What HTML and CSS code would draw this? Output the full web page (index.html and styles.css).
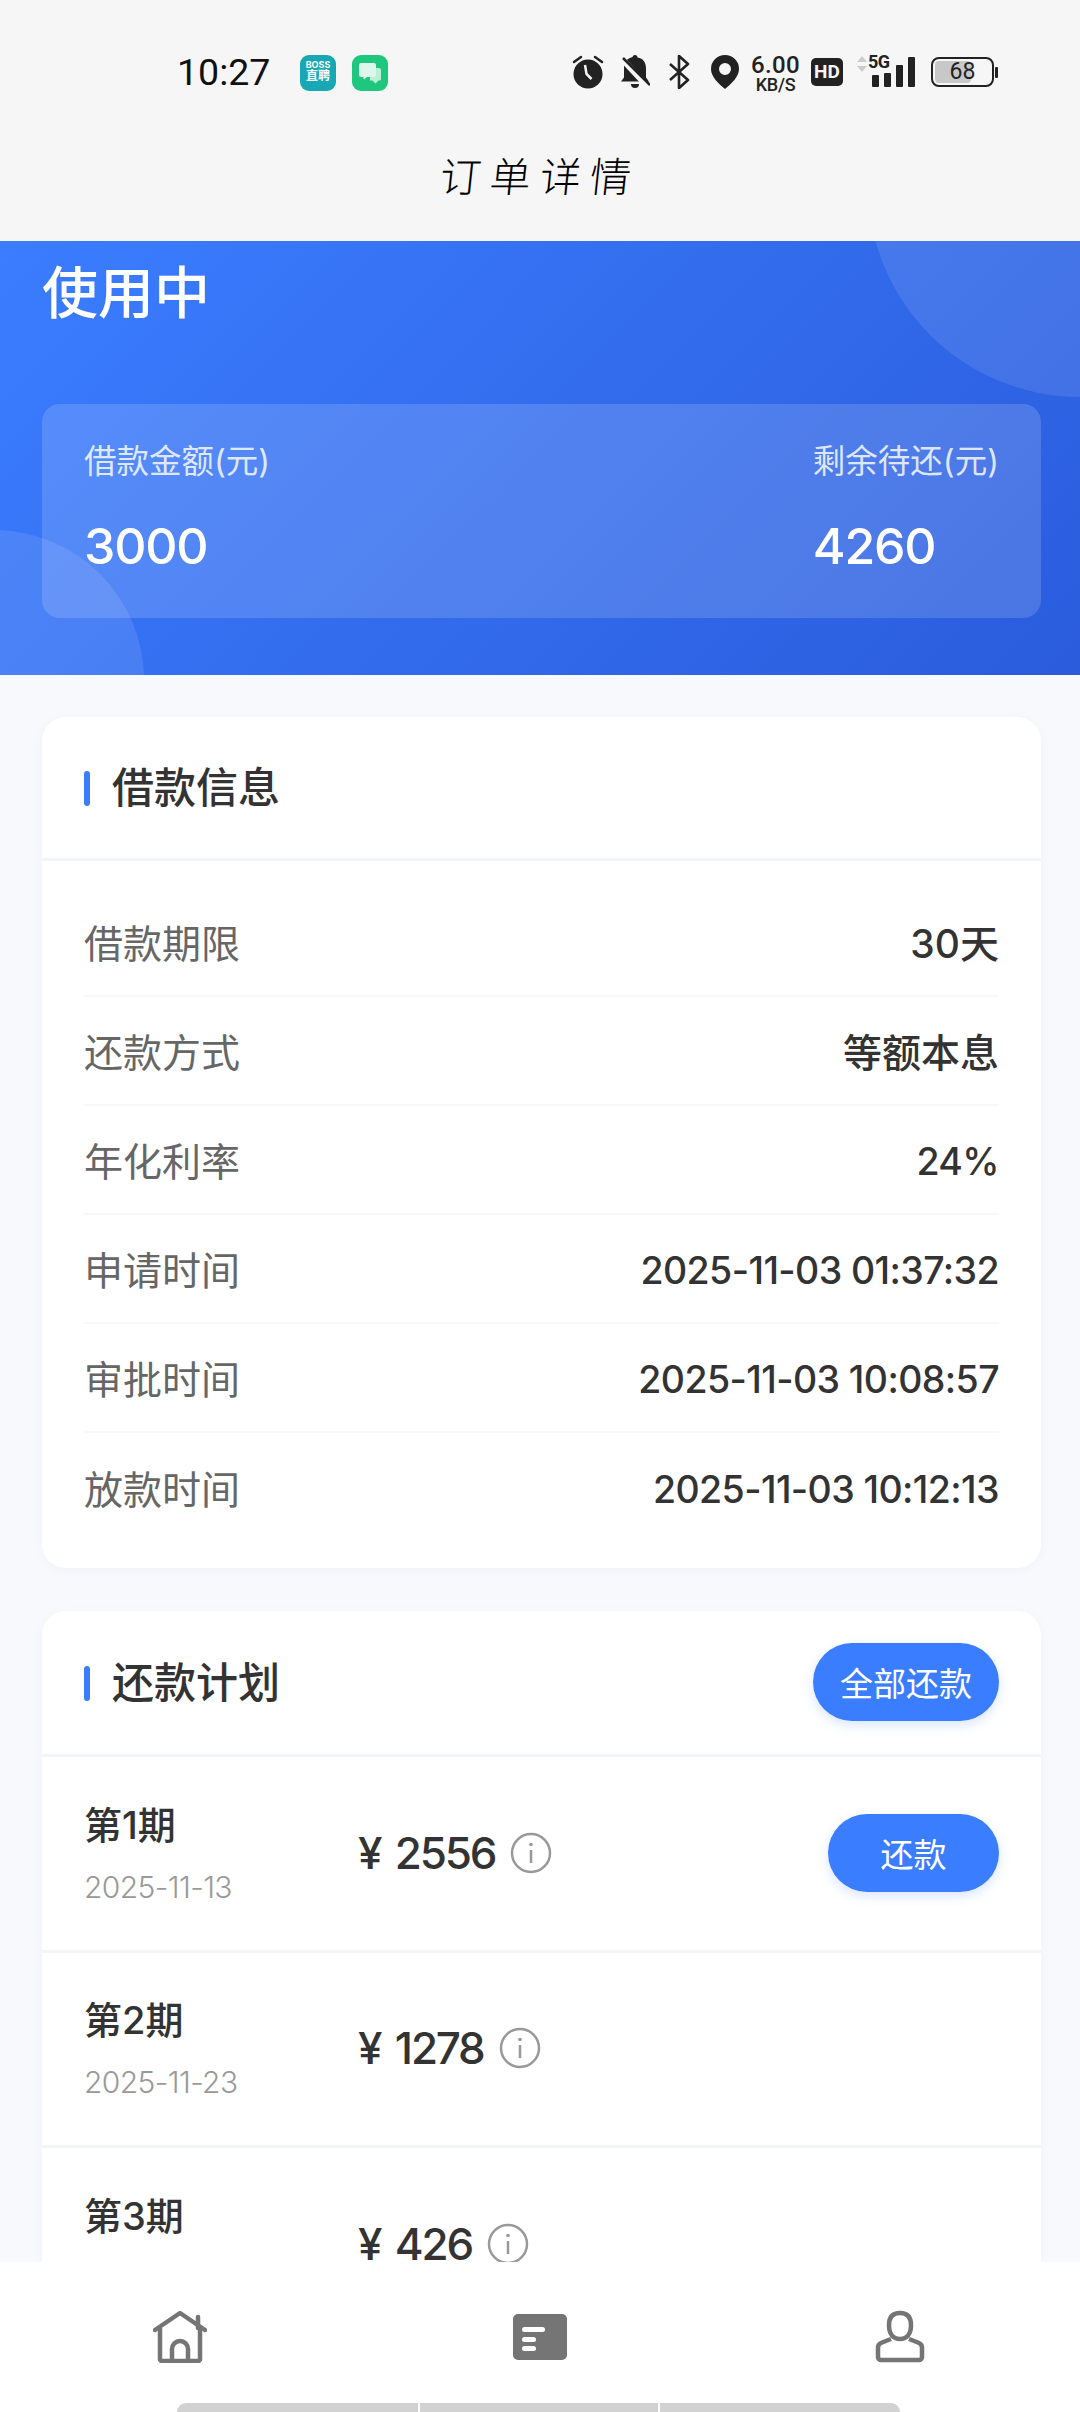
FILE: index.html
```html
<!DOCTYPE html>
<html lang="zh-CN">
<head>
<meta charset="utf-8">
<title>订单详情</title>
<link rel="stylesheet" href="styles.css">
</head>
<body>
<div class="page">
  <header class="topbar">
    <div class="status">
      <span class="time">10:27</span>
      <span class="app-icon boss"><span class="boss-a">BOSS</span><span class="boss-b">直聘</span></span>
      <span class="app-icon chat">
        <svg viewBox="0 0 36 36" width="36" height="36"><path d="M18 13h9a2 2 0 0 1 2 2v9a1.500 1.500 0 0 1-1.500 1.500h-1l-3 3-3-3H18z" fill="#fff" opacity=".7"/><path d="M9 8h13a2 2 0 0 1 2 2v10a2 2 0 0 1-2 2h-7l-3 2.500-1-2.500H9a2 2 0 0 1-2-2V10a2 2 0 0 1 2-2z" fill="#dff7ea"/></svg>
      </span>
      <span class="status-right">
        <svg class="ic ic-alarm" viewBox="0 0 32 34" width="32" height="34"><circle cx="16" cy="19" r="14.500" fill="#222"/><path d="M2 7l7-5M30 7l-7-5" stroke="#222" stroke-width="2.500" stroke-linecap="round"/><path d="M13 10l1.500 9 5 5" stroke="#f6f6f6" stroke-width="2.500" fill="none"/></svg>
        <svg class="ic ic-bell" viewBox="0 0 30 34" width="30" height="34"><path d="M15 0a2.500 2.500 0 0 1 2.500 2.500c6 1 8.500 5 8.500 11v9l3 4H1l3-4v-10c0-6 3-9 8.500-10.500A2.500 2.500 0 0 1 15 0z" fill="#222"/><path d="M11 29h8a4 4 0 0 1-8 0z" fill="#222"/><path d="M1 3l27 29" stroke="#f6f6f6" stroke-width="6"/><path d="M3 3l27 27" stroke="#222" stroke-width="2.500"/></svg>
        <svg class="ic ic-bt" viewBox="0 0 21 34" width="21" height="34"><path d="M1 9l18 16-9 8V1l9 8L1 25" fill="none" stroke="#222" stroke-width="2.600" stroke-linejoin="round"/></svg>
        <svg class="ic ic-pin" viewBox="0 0 28 34" width="28" height="34"><path fill-rule="evenodd" d="M14 0a14 14 0 0 1 14 14c0 8-8 15-14 20C8 29 0 22 0 14A14 14 0 0 1 14 0zm0 8a6 6 0 1 0 0 12 6 6 0 0 0 0-12z" fill="#222"/></svg>
        <span class="speed"><span class="speed-a">6.00</span><span class="speed-b">KB/S</span></span>
        <span class="hd">HD</span>
        <span class="signal">
          <svg class="updown" viewBox="0 0 12 16" width="12" height="16"><path d="M6 0l5 6H1zM6 16l5-6H1z" fill="#ccc"/></svg>
          <span class="fiveg">5G</span>
          <span class="bars"><i class="b1"></i><i class="b2"></i><i class="b3"></i><i class="b4"></i></span>
        </span>
        <span class="battery"><span class="batt-body"><span class="batt-fill"></span><span class="batt-num">68</span></span><span class="batt-cap"></span></span>
      </span>
    </div>
    <h1 class="page-title">订单详情</h1>
  </header>

  <main class="content">
    <section class="hero">
      <span class="orb orb-a"></span>
      <span class="orb orb-b"></span>
      <h2 class="hero-title">使用中</h2>
      <div class="hero-box">
        <div class="stat"><div class="stat-label">借款金额(元)</div><div class="stat-value">3000</div></div>
        <div class="stat"><div class="stat-label">剩余待还(元)</div><div class="stat-value">4260</div></div>
      </div>
    </section>

    <section class="card info-card">
      <div class="card-head"><span class="head-title">借款信息</span></div>
      <div class="info-list">
        <div class="info-row"><span class="info-k">借款期限</span><span class="info-v">30天</span></div>
        <div class="info-row"><span class="info-k">还款方式</span><span class="info-v">等额本息</span></div>
        <div class="info-row"><span class="info-k">年化利率</span><span class="info-v num">24%</span></div>
        <div class="info-row"><span class="info-k">申请时间</span><span class="info-v num">2025-11-03 01:37:32</span></div>
        <div class="info-row"><span class="info-k">审批时间</span><span class="info-v num">2025-11-03 10:08:57</span></div>
        <div class="info-row"><span class="info-k">放款时间</span><span class="info-v num">2025-11-03 10:12:13</span></div>
      </div>
    </section>

    <section class="card plan-card">
      <div class="card-head plan-head"><span class="head-title">还款计划</span><button class="pill pill-wide">全部还款</button></div>
      <div class="plan-row">
        <div class="plan-when"><div class="plan-no">第1期</div><div class="plan-date">2025-11-13</div></div>
        <div class="plan-amt"><span>¥ 2556</span><svg class="info-ic" viewBox="0 0 42 42" width="42" height="42"><circle cx="21" cy="21" r="19" fill="none" stroke="#999" stroke-width="2.500"/><path d="M21 18v13" stroke="#999" stroke-width="2.500"/><circle cx="21" cy="12.500" r="1.800" fill="#999"/></svg></div>
        <button class="pill">还款</button>
      </div>
      <div class="plan-row">
        <div class="plan-when"><div class="plan-no">第2期</div><div class="plan-date">2025-11-23</div></div>
        <div class="plan-amt"><span>¥ 1278</span><svg class="info-ic" viewBox="0 0 42 42" width="42" height="42"><circle cx="21" cy="21" r="19" fill="none" stroke="#999" stroke-width="2.500"/><path d="M21 18v13" stroke="#999" stroke-width="2.500"/><circle cx="21" cy="12.500" r="1.800" fill="#999"/></svg></div>
      </div>
      <div class="plan-row">
        <div class="plan-when"><div class="plan-no">第3期</div><div class="plan-date">2025-12-03</div></div>
        <div class="plan-amt"><span>¥ 426</span><svg class="info-ic" viewBox="0 0 42 42" width="42" height="42"><circle cx="21" cy="21" r="19" fill="none" stroke="#999" stroke-width="2.500"/><path d="M21 18v13" stroke="#999" stroke-width="2.500"/><circle cx="21" cy="12.500" r="1.800" fill="#999"/></svg></div>
      </div>
    </section>
  </main>

  <nav class="tabbar">
    <div class="tabs">
      <svg class="tab" viewBox="0 0 54 52" width="54" height="52"><path d="M2 19L27 2l25 17" fill="none" stroke="#757575" stroke-width="4.500" stroke-linecap="round" stroke-linejoin="round"/><path d="M7 17v31a2 2 0 0 0 2 2h36a2 2 0 0 0 2-2V17" fill="none" stroke="#757575" stroke-width="4.500"/><path d="M19 49V38a8 8 0 0 1 16 0v11" fill="none" stroke="#757575" stroke-width="4.500"/><path d="M45 6v11" stroke="#757575" stroke-width="4.500" stroke-linecap="round"/></svg>
      <svg class="tab" viewBox="0 0 54 46" width="54" height="46"><rect width="54" height="46" rx="5" fill="#757575"/><rect x="9" y="13" width="23" height="5" rx="2.500" fill="#fff"/><rect x="9" y="23" width="14" height="5" rx="2.500" fill="#fff"/><rect x="9" y="32" width="14" height="5" rx="2.500" fill="#fff"/></svg>
      <svg class="tab" viewBox="0 0 50 54" width="50" height="54"><path d="M25 3c8 0 11 5 11 12 0 9-4 14-11 14s-11-5-11-14c0-7 3-12 11-12z" fill="none" stroke="#757575" stroke-width="4.500"/><path d="M16 29l-9 3.500c-2.500 1-4 2.500-4 5V47a3 3 0 0 0 3 3h38a3 3 0 0 0 3-3v-9.500c0-2.500-1.500-4-4-5L34 29" fill="none" stroke="#757575" stroke-width="4.500" stroke-linejoin="round"/></svg>
    </div>
    <div class="gesture"><i></i><i></i><i></i></div>
  </nav>
</div>
</body>
</html>
```
FILE: styles.css
```css
* { box-sizing: border-box; margin: 0; padding: 0; }
html, body { width: 1080px; height: 2412px; overflow: hidden; }
body { font-family: "Inter", "Noto Sans CJK SC", sans-serif; background: #f8f9fd; color: #333; }
.page { position: relative; width: 1080px; height: 2412px; overflow: hidden; display: flex; flex-direction: column; }

.topbar { height: 241px; background: #f6f6f6; flex: none; }
.status { height: 144px; padding: 50px 82px 0 177px; display: flex; align-items: flex-start; }
.time { font-size: 37.500px; line-height: 44px; color: #111; font-family: "Roboto", sans-serif; width: 123px; }
.app-icon { width: 36px; height: 36px; border-radius: 9px; margin: 5px 16px 0 0; display: flex; flex-direction: column; align-items: center; overflow: hidden; }
.boss { background: #17a8b4; color: #fff; font-weight: 700; line-height: 1; }
.boss-a { font-size: 9px; margin-top: 5px; }
.boss-b { font-size: 12px; margin-top: 1px; }
.chat { background: #1fc77e; }
.status-right { margin-left: auto; display: flex; align-items: center; height: 44px; }
.ic { flex: none; }
.ic-alarm { margin-right: 16px; }
.ic-bell { margin-right: 19px; }
.ic-bt { margin-right: 21px; }
.ic-pin { margin-right: 12px; }
.speed { width: 49px; display: flex; flex-direction: column; align-items: center; margin-right: 11px; color: #222; font-family: "Roboto", sans-serif; font-weight: 500; line-height: 1; white-space: nowrap; }
.speed-a { font-size: 24px; height: 22px; letter-spacing: .3px; }
.speed-b { font-size: 18px; height: 16px; letter-spacing: -.3px; margin-top: 1px; }
.hd { width: 32px; height: 28px; background: #222; color: #f6f6f6; border-radius: 5px; font: 700 19px/28px "Roboto", sans-serif; text-align: center; margin-right: 13px; }
.signal { position: relative; width: 59px; height: 34px; margin-right: 16px; }
.updown { position: absolute; left: 0; top: 1px; }
.fiveg { position: absolute; left: 12px; top: -3px; font: 700 18px/20px "Roboto", sans-serif; letter-spacing: -.5px; color: #222; }
.bars { display: flex; align-items: flex-end; gap: 5.500px; height: 30px; position: absolute; left: 16px; top: 2px; }
.bars i { display: block; width: 6.500px; background: #222; border-radius: 1px; }
.b1 { height: 12px; } .b2 { height: 14px; } .b3 { height: 22px; } .b4 { height: 30px; }
.battery { display: flex; align-items: center; }
.batt-body { position: relative; width: 63px; height: 30px; border: 2.500px solid #222; border-radius: 8px; padding: 2px; display: block; }
.batt-fill { display: block; width: 65%; height: 100%; background: #c8c8c8; border-radius: 4px; }
.batt-num { position: absolute; inset: 0; text-align: center; font: 400 23px/25px "Roboto", sans-serif; color: #222; }
.batt-cap { width: 3px; height: 11px; background: #222; margin-left: 1px; border-radius: 1px; }
.page-title { font-size: 41px; font-weight: 300; line-height: 60px; text-align: center; letter-spacing: 9px; color: #000; transform: skewX(-6deg); margin-top: 3px; }

.content { flex: none; }
.hero { position: relative; height: 434px; overflow: hidden; padding: 0 39px 0 42px; background: linear-gradient(135deg, #3b7dff 0%, #2a5cdc 100%); color: #fff; }
.orb { position: absolute; border-radius: 50%; background: rgba(255, 255, 255, .1); }
.orb-a { width: 424px; height: 424px; left: 868px; top: -268px; }
.orb-b { width: 300px; height: 300px; left: -156px; top: 289px; }
.hero-title { font-size: 56px; line-height: 80px; font-weight: 500; padding-top: 3px; margin-top: 9px; height: 86px; }
.hero-box { position: relative; height: 214px; margin-top: 68px; padding: 36px 42px 0; background: rgba(255, 255, 255, .15); border-radius: 18px; display: flex; justify-content: space-between; }
.stat-label { font-size: 32.500px; line-height: 44px; color: rgba(255, 255, 255, .82); }
.stat-value { font-size: 50px; line-height: 64px; font-weight: 500; margin-top: 30px; letter-spacing: -1.200px; }

.card { background: #fff; border-radius: 24px; margin: 0 39px 0 42px; box-shadow: 0 2px 12px rgba(40, 70, 140, .03); overflow: hidden; }
.info-card { margin-top: 42px; height: 851px; }
.plan-card { margin-top: 43px; }
.card-head { height: 144px; border-bottom: 3px solid #f3f4f6; padding-left: 42px; display: flex; align-items: center; }
.head-title { font-size: 42px; font-weight: 500; color: #333; position: relative; padding: 0 0 6px 28px; }
.head-title::before { content: ""; position: absolute; left: 0; top: 50%; width: 6px; height: 35px; margin-top: -17px; background: #3b7dff; border-radius: 3px; }
.info-list { padding: 27px 42px 0; }
.info-row { height: 109px; display: flex; justify-content: space-between; align-items: center; border-bottom: 2px solid #f7f8fa; padding-bottom: 2px; }
.info-row:last-child { border-bottom: 0; }
.info-k { font-size: 39px; color: #666; }
.info-v { font-size: 39px; font-weight: 500; color: #333; }
.num { font-size: 37.500px; letter-spacing: -.6px; padding-top: 5px; }

.plan-head { justify-content: space-between; padding-right: 42px; height: 146px; }
.pill { height: 78px; width: 171px; border: 0; border-radius: 39px; background: #3b7dff; color: #fff; font-family: inherit; font-size: 33px; box-shadow: 0 4px 12px rgba(59, 125, 255, .2); }
.pill-wide { width: 186px; margin-bottom: 2px; }
.plan-row { height: 195.500px; padding: 0 42px; border-bottom: 3px solid #f3f4f6; display: flex; align-items: center; }
.plan-when { width: 274px; }
.plan-no { font-size: 38px; line-height: 50px; font-weight: 500; color: #333; margin-top: 3px; }
.plan-date { font-size: 30px; line-height: 46px; font-weight: 300; letter-spacing: -.6px; color: #999; margin-top: 14px; }
.plan-amt { flex: 1; display: flex; align-items: center; gap: 15px; font-size: 44px; font-weight: 500; color: #333; letter-spacing: -2.200px; word-spacing: 5px; padding-bottom: 1px; }
.info-ic { flex: none; }

.tabbar { position: absolute; left: 0; right: 0; bottom: 0; height: 150px; background: #fff; display: flex; flex-direction: column; justify-content: space-between; }
.tabs { display: grid; grid-template-columns: repeat(3, 360px); justify-items: center; align-items: center; height: 58px; margin-top: 46px; }
.gesture { display: grid; grid-template-columns: 241px 238px 240px; gap: 2px; width: 723px; height: 9px; margin-left: 177px; border-radius: 9px 9px 0 0; overflow: hidden; }
.gesture i { background: #d2d2d2; }
```
